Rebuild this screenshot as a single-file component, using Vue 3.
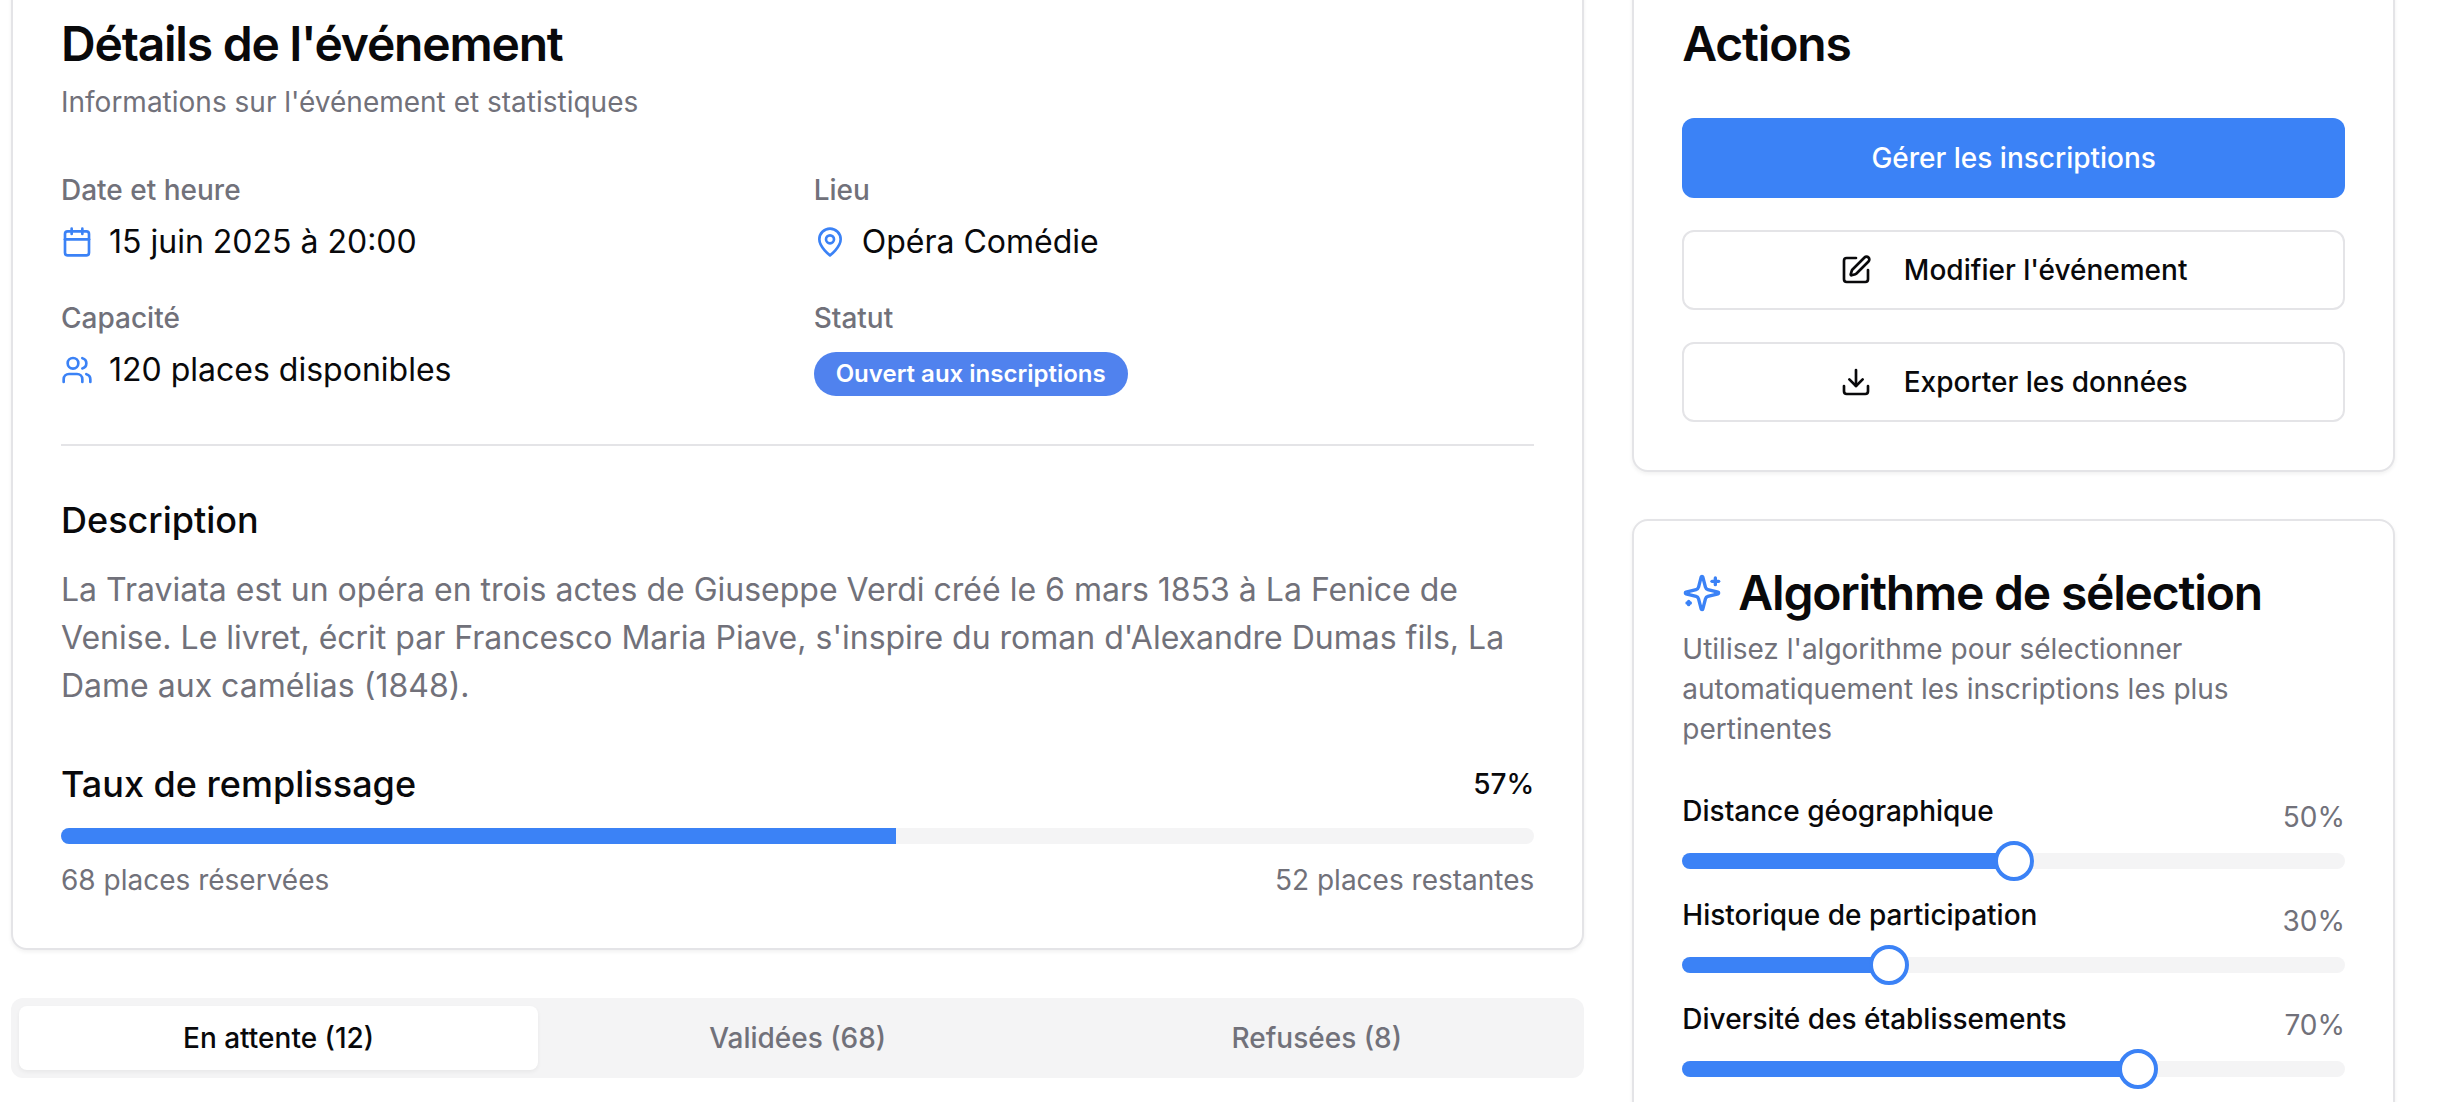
<script setup>
const weights = [
  { label: 'Distance géographique', value: 50 },
  { label: 'Historique de participation', value: 30 },
  { label: 'Diversité des établissements', value: 70 }
]
const thumbLeft = (v) => `calc(${v / 100} * (100% - 40px))`
</script>

<template>
  <div class="viewport">
    <div class="layout">
      <div class="main">
        <section class="card">
          <header class="card-head">
            <h2 class="title lift">Détails de l'événement</h2>
            <p class="sub">Informations sur l'événement et statistiques</p>
          </header>
          <div class="card-body">
            <div class="facts">
              <div class="fact">
                <div class="fact-label">Date et heure</div>
                <div class="fact-value">
                  <svg class="ic blue" viewBox="0 0 24 24"><path d="M8 2v4" /><path d="M16 2v4" /><rect width="18" height="18" x="3" y="4" rx="2" /><path d="M3 10h18" /></svg>
                  <span>15 juin 2025 à 20:00</span>
                </div>
              </div>
              <div class="fact">
                <div class="fact-label">Lieu</div>
                <div class="fact-value">
                  <svg class="ic blue" viewBox="0 0 24 24"><path d="M20 10c0 6-8 12-8 12s-8-6-8-12a8 8 0 0 1 16 0Z" /><circle cx="12" cy="10" r="3" /></svg>
                  <span>Opéra Comédie</span>
                </div>
              </div>
              <div class="fact">
                <div class="fact-label">Capacité</div>
                <div class="fact-value">
                  <svg class="ic blue" viewBox="0 0 24 24"><path d="M16 21v-2a4 4 0 0 0-4-4H6a4 4 0 0 0-4 4v2" /><circle cx="9" cy="7" r="4" /><path d="M22 21v-2a4 4 0 0 0-3-3.87" /><path d="M16 3.13a4 4 0 0 1 0 7.75" /></svg>
                  <span>120 places disponibles</span>
                </div>
              </div>
              <div class="fact">
                <div class="fact-label">Statut</div>
                <div class="badge-row"><span class="badge">Ouvert aux inscriptions</span></div>
              </div>
            </div>
            <div class="divider"></div>
            <h3 class="section">Description</h3>
            <p class="desc">La Traviata est un opéra en trois actes de Giuseppe Verdi créé le 6 mars 1853 à La Fenice de Venise. Le livret, écrit par Francesco Maria Piave, s'inspire du roman d'Alexandre Dumas fils, La Dame aux camélias (1848).</p>
            <div class="fill-head">
              <h3 class="section">Taux de remplissage</h3>
              <span class="fill-pct">57%</span>
            </div>
            <div class="bar"><div class="bar-fill" :style="{ width: (68 / 120) * 100 + '%' }"></div></div>
            <div class="fill-foot">
              <span>68 places réservées</span>
              <span>52 places restantes</span>
            </div>
          </div>
        </section>
        <div class="tabs">
          <div class="tab active">En attente (12)</div>
          <div class="tab">Validées (68)</div>
          <div class="tab">Refusées (8)</div>
        </div>
      </div>

      <aside class="side">
        <section class="card">
          <header class="card-head">
            <h2 class="title lift">Actions</h2>
          </header>
          <div class="card-body actions">
            <button class="btn primary">Gérer les inscriptions</button>
            <button class="btn outline">
              <svg class="ic" viewBox="0 0 24 24"><path d="M12 3H5a2 2 0 0 0-2 2v14a2 2 0 0 0 2 2h14a2 2 0 0 0 2-2v-7" /><path d="M18.375 2.625a1 1 0 0 1 3 3l-9.013 9.014a2 2 0 0 1-.853.505l-2.873.84a.5.5 0 0 1-.62-.62l.84-2.873a2 2 0 0 1 .506-.852z" /></svg>
              <span>Modifier l'événement</span>
            </button>
            <button class="btn outline">
              <svg class="ic" viewBox="0 0 24 24"><path d="M21 15v4a2 2 0 0 1-2 2H5a2 2 0 0 1-2-2v-4" /><polyline points="7 10 12 15 17 10" /><line x1="12" x2="12" y1="15" y2="3" /></svg>
              <span>Exporter les données</span>
            </button>
          </div>
        </section>
        <section class="card">
          <header class="card-head">
            <h2 class="title with-icon">
              <svg class="ic-lg blue" viewBox="0 0 24 24"><path d="M9.937 15.5A2 2 0 0 0 8.5 14.063l-6.135-1.582a.5.5 0 0 1 0-.962L8.5 9.936A2 2 0 0 0 9.937 8.5l1.582-6.135a.5.5 0 0 1 .963 0L14.063 8.5A2 2 0 0 0 15.5 9.937l6.135 1.581a.5.5 0 0 1 0 .964L15.5 14.063a2 2 0 0 0-1.437 1.437l-1.582 6.135a.5.5 0 0 1-.963 0z" /><path d="M20 3v4" /><path d="M22 5h-4" /><path d="M4 17v2" /><path d="M5 18H3" /></svg>
              <span>Algorithme de sélection</span>
            </h2>
            <p class="sub">Utilisez l'algorithme pour sélectionner automatiquement les inscriptions les plus pertinentes</p>
          </header>
          <div class="card-body sliders">
            <div v-for="w in weights" :key="w.label" class="weight">
              <div class="weight-head">
                <span class="weight-label">{{ w.label }}</span>
                <span class="weight-pct">{{ w.value }}%</span>
              </div>
              <div class="slider">
                <div class="track"><div class="range" :style="{ width: w.value + '%' }"></div></div>
                <div class="thumb" :style="{ left: thumbLeft(w.value) }"></div>
              </div>
            </div>
            <div class="sliders-rest"></div>
          </div>
        </section>
      </aside>
    </div>
  </div>
</template>

<style>
html, body { margin: 0; background: #fff; overflow: hidden; }
</style>

<style scoped>
.viewport {
  height: 1102px;
  overflow: hidden;
  font-family: Inter, "Liberation Sans", sans-serif;
  color: #09090b;
}
.layout {
  display: grid;
  grid-template-columns: repeat(3, 1fr);
  gap: 48px;
  width: 2384px;
  margin: -28px 0 0 11px;
}
.main { grid-column: span 2; display: flex; flex-direction: column; gap: 48px; min-width: 0; }
.side { display: flex; flex-direction: column; gap: 47px; min-width: 0; }
.card {
  background: #fff;
  border: 2px solid #e4e4e7;
  border-radius: 16px;
  box-shadow: 0 2px 4px rgba(0, 0, 0, 0.06);
}
.card-head { padding: 48px 48px 48px; display: flex; flex-direction: column; gap: 12px; }
.card-body { padding: 0 48px 48px; }
.title { margin: 0; font-size: 48px; line-height: 48px; font-weight: 600; letter-spacing: -0.025em; }
.title.lift { margin: -2px 0 2px; }
.with-icon { display: flex; align-items: center; gap: 16px; }
.sub { margin: 0; font-size: 28px; line-height: 40px; color: #71717a; }
.facts { display: grid; grid-template-columns: 1fr 1fr; gap: 32px; }
.fact-label { font-size: 28px; line-height: 40px; font-weight: 500; color: #71717a; margin-bottom: 8px; }
.fact-value { display: flex; align-items: center; gap: 16px; font-size: 32px; line-height: 48px; }
.ic, .ic-lg {
  fill: none;
  stroke: currentColor;
  stroke-width: 2;
  stroke-linecap: round;
  stroke-linejoin: round;
  flex: none;
}
.ic { width: 32px; height: 32px; }
.ic-lg { width: 40px; height: 40px; }
.blue { color: #3b82f6; }
.badge-row { display: flex; padding-top: 6px; }
.badge {
  display: inline-flex;
  align-items: center;
  font-size: 24px;
  line-height: 32px;
  font-weight: 600;
  color: #fff;
  background: #5082ee;
  border-radius: 999px;
  padding: 6px 22px;
}
.divider { height: 2px; background: #e4e4e7; margin: 48px 0 46px; }
.section { margin: 0; font-size: 36px; line-height: 56px; font-weight: 500; }
.desc { margin: 18px 0 46px; font-size: 32px; line-height: 48px; color: #71717a; }
.fill-head { display: flex; justify-content: space-between; align-items: center; margin-bottom: 16px; }
.fill-pct { font-size: 28px; line-height: 40px; font-weight: 500; }
.bar { height: 16px; border-radius: 999px; background: #f4f4f5; overflow: hidden; }
.bar-fill { height: 100%; background: #3b82f6; }
.fill-foot {
  display: flex;
  justify-content: space-between;
  margin-top: 16px;
  font-size: 28px;
  line-height: 40px;
  color: #71717a;
}
.tabs {
  display: grid;
  grid-template-columns: repeat(3, 1fr);
  padding: 8px;
  border-radius: 12px;
  background: #f4f4f5;
}
.tab {
  height: 64px;
  display: flex;
  align-items: center;
  justify-content: center;
  border-radius: 8px;
  font-size: 28px;
  font-weight: 500;
  color: #71717a;
}
.tab.active { background: #fff; color: #09090b; box-shadow: 0 2px 4px rgba(0, 0, 0, 0.05); }
.actions { display: flex; flex-direction: column; gap: 32px; }
.btn {
  height: 80px;
  display: flex;
  align-items: center;
  justify-content: center;
  gap: 32px;
  border-radius: 12px;
  font-family: inherit;
  font-size: 28px;
  font-weight: 500;
  padding: 0;
}
.primary { background: #3b82f6; color: #fff; border: none; }
.outline { background: #fff; color: #09090b; border: 2px solid #e4e4e7; }
.sliders { display: flex; flex-direction: column; gap: 20px; }
.weight-head { display: flex; justify-content: space-between; align-items: flex-start; margin-bottom: 4px; }
.weight-label { font-size: 28px; line-height: 28px; font-weight: 500; }
.weight-pct { font-size: 28px; line-height: 40px; color: #71717a; }
.slider { position: relative; height: 40px; display: flex; align-items: center; }
.track { width: 100%; height: 16px; border-radius: 999px; background: #f4f4f5; overflow: hidden; }
.range { height: 100%; background: #3b82f6; }
.thumb {
  position: absolute;
  top: 0;
  width: 40px;
  height: 40px;
  box-sizing: border-box;
  border: 4px solid #3b82f6;
  border-radius: 50%;
  background: #fff;
}
.sliders-rest { height: 120px; }
</style>
